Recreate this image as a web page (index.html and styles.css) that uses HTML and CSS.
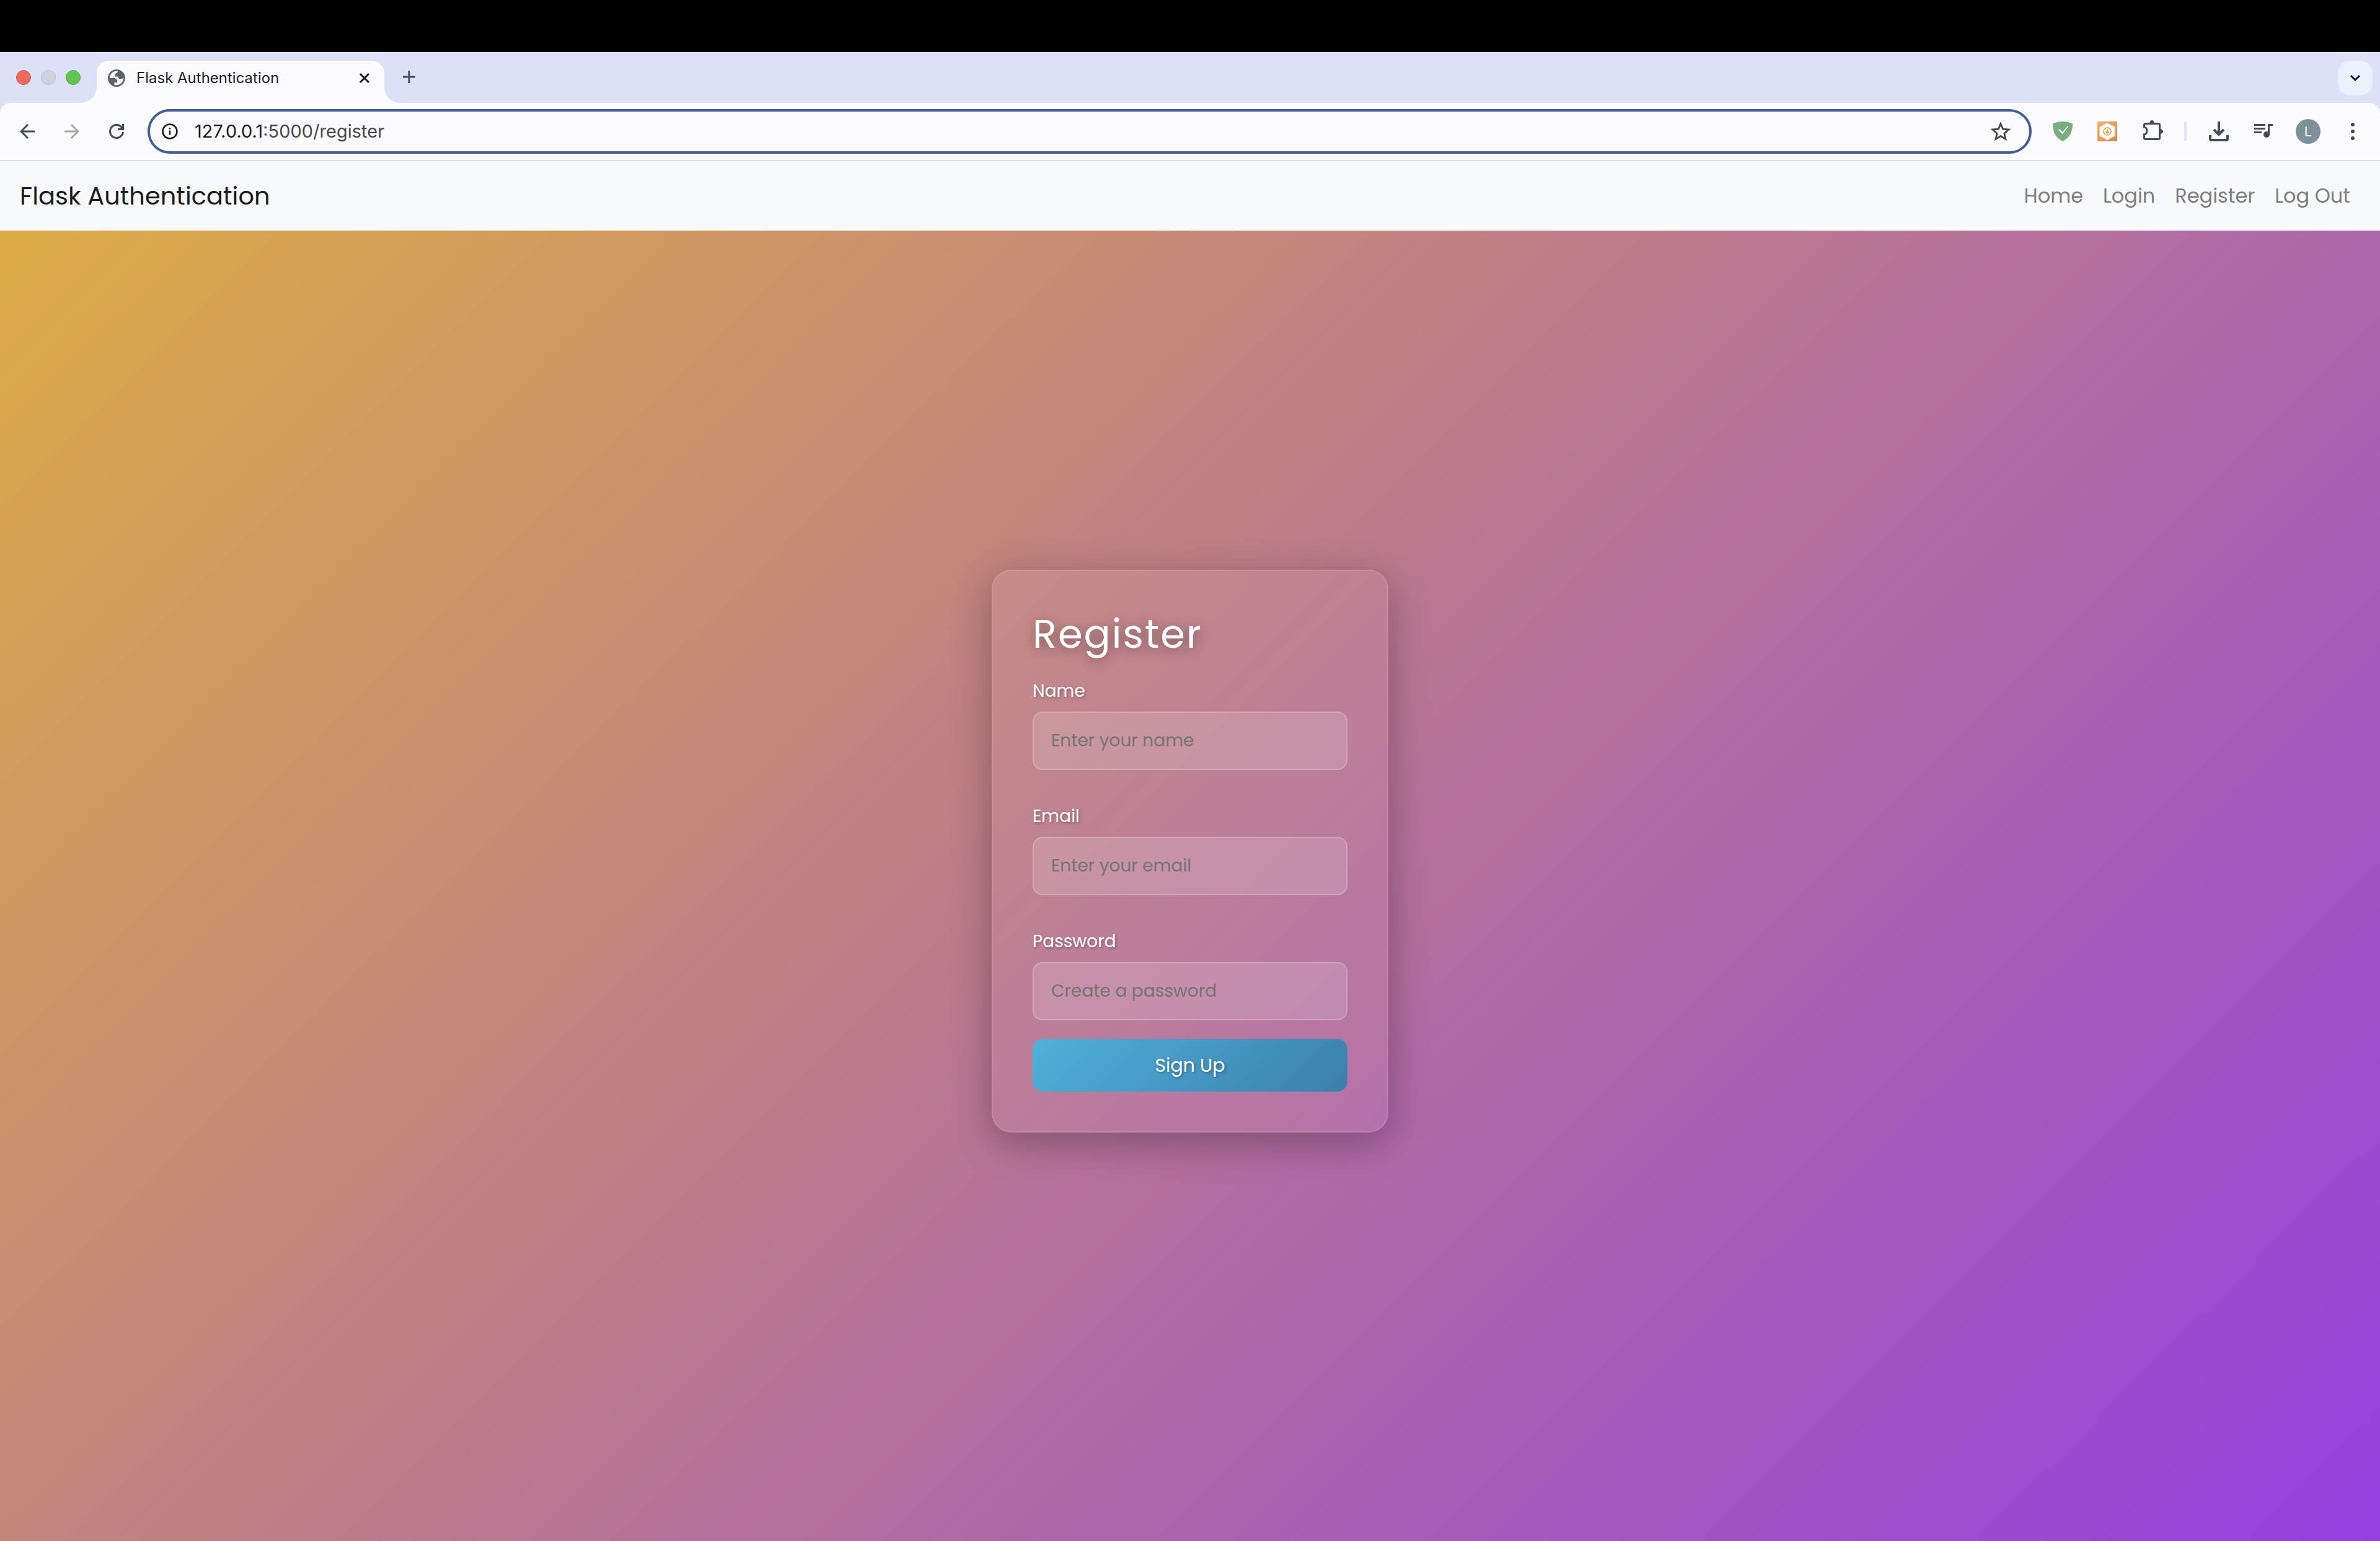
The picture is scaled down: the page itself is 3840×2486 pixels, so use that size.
FILE: index.html
```
<!DOCTYPE html>
<html lang="en">
<head>
<meta charset="utf-8">
<title>Flask Authentication</title>
<link rel="stylesheet" href="styles.css">
</head>
<body>
<div class="screen-top"></div>

<header class="tab-strip">
  <div class="window-controls">
    <span class="light light-close"></span>
    <span class="light light-min"></span>
    <span class="light light-max"></span>
  </div>
  <div class="tab">
    <svg class="favicon" viewBox="2 2 20 20" aria-hidden="true"><path fill="#5f6368" fill-rule="evenodd" d="M12 2C6.480 2 2 6.480 2 12s4.480 10 10 10 10-4.480 10-10S17.520 2 12 2zM4 12h4.400c3.407.022 4.922 1.730 4.543 5.127H9.488v2.470a8.004 8.004 0 0 0 10.498-8.083C19.327 12.504 18.332 13 17 13c-2.137 0-3.206-.916-3.206-2.750h-3.748c-.274-2.728.683-4.092 2.870-4.092 0-.975.327-1.597.811-1.970A8.004 8.004 0 0 0 4 12z"/></svg>
    <span class="tab-title">Flask Authentication</span>
    <button class="icon-btn" aria-label="Close tab"><svg width="18" height="18" viewBox="0 0 18 18"><path d="M2 2l14 14M16 2L2 16" stroke="#1b1c20" stroke-width="3" fill="none"/></svg></button>
  </div>
  <button class="icon-btn new-tab" aria-label="New tab"><svg width="20" height="20" viewBox="0 0 20 20"><path d="M10 0v20M0 10h20" stroke="#444a59" stroke-width="3" fill="none"/></svg></button>
  <button class="icon-btn tab-search" aria-label="Search tabs"><svg width="18" height="12" viewBox="0 0 18 12"><path d="M2 2l7 7 7-7" stroke="#1b1c20" stroke-width="3" fill="none"/></svg></button>
</header>

<div class="toolbar">
  <div class="nav-buttons">
    <button class="icon-btn" aria-label="Back"><svg width="24" height="24" viewBox="0 0 24 24"><path d="M24 12H3M13 1L2 12l11 11" stroke="#444a59" stroke-width="3" fill="none"/></svg></button>
    <button class="icon-btn" aria-label="Forward"><svg width="24" height="24" viewBox="0 0 24 24"><path d="M0 12h21M11 1l11 11-11 11" stroke="#a6a6aa" stroke-width="3" fill="none"/></svg></button>
    <button class="icon-btn" aria-label="Reload"><svg width="24" height="24" viewBox="0 0 24 24"><path d="M22.500 13A10.500 10.500 0 1 1 19.500 4.500L22 7.500M22.500 0v8.500H14" stroke="#444a59" stroke-width="3" fill="none"/></svg></button>
  </div>
  <div class="omnibox">
    <svg width="28" height="28" viewBox="0 0 28 28" aria-hidden="true"><circle cx="14" cy="14" r="11.500" fill="none" stroke="#1b1c20" stroke-width="2.600"/><path d="M14 12.500v7M14 8v2.500" stroke="#1b1c20" stroke-width="2.500"/></svg>
    <span class="url">127.0.0.1<span class="url-path">:5000/register</span></span>
    <button class="icon-btn star" aria-label="Bookmark this page"><svg width="32" height="32" viewBox="0 0 32 32"><path d="M16 3.500l3.600 8.700 9.400.8-7.100 6.200 2.100 9.200-8-4.900-8 4.900 2.100-9.200L3 13l9.400-.8z" stroke="#47474b" stroke-width="2.800" fill="none"/></svg></button>
  </div>
  <div class="extensions">
    <button class="icon-btn" aria-label="AdGuard"><svg width="32" height="32" viewBox="0 0 32 32"><path d="M16 0c5 0 11 1 16 3.500C32 16 28 26 16 32 4 26 0 16 0 3.500 5 1 11 0 16 0z" fill="#7aae7c"/><path d="M9 13.500l2.500-1 4 4.500L24 7.500l1 .7L15.700 20.500z" fill="#fff"/></svg></button>
    <button class="icon-btn" aria-label="Downloader"><svg width="32" height="32" viewBox="0 0 32 32"><defs><linearGradient id="amber" x1="0" y1="0" x2="1" y2="1"><stop offset="0" stop-color="#e7b46a"/><stop offset="1" stop-color="#db8452"/></linearGradient></defs><path d="M0 0h32v32H0z" fill="url(#amber)"/><path d="M16 1.500l13 7v15l-13 7-13-7v-15z" fill="#f4cf9c"/><path d="M16 3l11.500 6.300v13.400L16 29 4.500 22.700V9.300z" fill="#fff"/><circle cx="16" cy="16" r="6" fill="none" stroke="#e3a04c" stroke-width="1.700"/><path d="M16 12v7M12.800 16l3.200 3 3.200-3" fill="none" stroke="#e3a04c" stroke-width="1.800"/></svg></button>
    <button class="icon-btn puzzle" aria-label="Extensions"><svg width="32" height="32" viewBox="0 0 32 32"><path d="M1.500 11V7.500a2 2 0 0 1 2-2h21a2 2 0 0 1 2 2v21a2 2 0 0 1-2 2h-21a2 2 0 0 1-2-2V23c6-.5 6-11.500 0-12z" fill="none" stroke="#444a59" stroke-width="3"/><path d="M10 5a4 5 0 0 1 8 0zM27 14a5 4 0 0 1 0 8z" fill="#444a59"/></svg></button>
  </div>
  <span class="divider"></span>
  <div class="browser-actions">
    <button class="icon-btn" aria-label="Downloads"><svg width="32" height="32" viewBox="0 0 32 32"><path d="M16 0v21M8 13l8 8 8-8" fill="none" stroke="#444a59" stroke-width="4"/><path d="M2 22v6a2 2 0 0 0 2 2h24a2 2 0 0 0 2-2v-6" fill="none" stroke="#444a59" stroke-width="4"/></svg></button>
    <button class="icon-btn" aria-label="Media controls"><svg width="32" height="32" viewBox="0 0 32 32"><path d="M1 5.500h18M1 11.500h18M1 17.500h12M31 5.500h-6.500V21" fill="none" stroke="#444a59" stroke-width="3"/><circle cx="21" cy="21" r="5" fill="#444a59"/></svg></button>
    <button class="icon-btn avatar" aria-label="Profile">L</button>
    <button class="icon-btn menu-btn" aria-label="Menu"><svg width="6" height="28" viewBox="0 0 6 28"><g fill="#444a59"><circle cx="3" cy="3" r="3"/><circle cx="3" cy="14" r="3"/><circle cx="3" cy="25" r="3"/></g></svg></button>
  </div>
</div>

<div class="page">
  <nav class="navbar">
    <a class="brand" href="#">Flask Authentication</a>
    <div class="links">
      <a href="#">Home</a>
      <a href="#">Login</a>
      <a href="#">Register</a>
      <a href="#">Log Out</a>
    </div>
  </nav>
  <main class="content">
    <form class="card">
      <h1 class="card-title">Register</h1>
      <div class="field">
        <label for="name">Name</label>
        <input id="name" type="text" placeholder="Enter your name">
      </div>
      <div class="field">
        <label for="email">Email</label>
        <input id="email" type="email" placeholder="Enter your email">
      </div>
      <div class="field">
        <label for="password">Password</label>
        <input id="password" type="password" placeholder="Create a password">
      </div>
      <button class="submit" type="submit">Sign Up</button>
    </form>
  </main>
</div>
</body>
</html>
```
FILE: styles.css
```
* {
  box-sizing: border-box;
}

body {
  margin: 0;
  min-height: 100vh;
  display: flex;
  flex-direction: column;
  font-family: Poppins, Inter, "Noto Sans", sans-serif;
}

button {
  font-family: inherit;
  border: 0;
  padding: 0;
  cursor: pointer;
}

svg {
  display: block;
  flex: none;
}

a {
  text-decoration: none;
}

.icon-btn {
  display: flex;
  align-items: center;
  justify-content: center;
  flex: none;
  background: none;
}

/* Browser window */

.screen-top {
  height: 84px;
  background: #000;
}

.tab-strip,
.toolbar {
  font-family: Inter, "Noto Sans", sans-serif;
}

.tab-strip {
  height: 82px;
  padding: 14px 12px 0 26px;
  display: flex;
  align-items: flex-start;
  background: #dce1f7;
}

.window-controls {
  display: flex;
  gap: 16px;
  padding-top: 15px;
}

.light {
  width: 24px;
  height: 24px;
  border-radius: 50%;
  border: 1px solid;
}

.light-close {
  background: #ed6a5e;
  border-color: #d55549;
}

.light-min {
  background: #d1d3df;
  border-color: #bcbecb;
}

.light-max {
  background: #61c554;
  border-color: #4cab40;
}

.tab {
  position: relative;
  width: 464px;
  height: 68px;
  margin-left: 26px;
  padding: 0 23px 12px 18px;
  display: flex;
  align-items: center;
  background: #fafaff;
  border-radius: 20px 20px 0 0;
}

.tab::before,
.tab::after {
  content: "";
  position: absolute;
  bottom: 0;
  width: 24px;
  height: 24px;
}

.tab::before {
  right: 100%;
  background: radial-gradient(circle at 0 0, transparent 23px, #fafaff 24px);
}

.tab::after {
  left: 100%;
  background: radial-gradient(circle at 100% 0, transparent 23px, #fafaff 24px);
}

.favicon {
  width: 28px;
  height: 28px;
}

.tab-title {
  flex: 1;
  margin-left: 18px;
  font-size: 24px;
  line-height: 32px;
  color: #1b1c20;
}

.new-tab {
  width: 56px;
  height: 56px;
  margin-left: 12px;
  padding-bottom: 4px;
}

.tab-search {
  width: 56px;
  height: 56px;
  margin-left: auto;
  border-radius: 20px;
  background: #ecefff;
}

.toolbar {
  height: 94px;
  padding: 10px 41px 10px 32px;
  display: flex;
  align-items: flex-start;
  background: #fafaff;
  border-bottom: 2px solid #dfe1ec;
  position: relative;
}

.toolbar::before,
.toolbar::after {
  content: "";
  position: absolute;
  top: 0;
  width: 16px;
  height: 16px;
}

.toolbar::before {
  left: 0;
  background: radial-gradient(circle at 100% 100%, #fafaff 15px, #dce1f7 16px);
}

.toolbar::after {
  right: 0;
  background: radial-gradient(circle at 0 100%, #fafaff 15px, #dce1f7 16px);
}

.nav-buttons,
.extensions,
.browser-actions {
  height: 72px;
  display: flex;
  align-items: center;
}

.nav-buttons {
  gap: 48px;
  margin-right: 38px;
}

.omnibox {
  flex: 1;
  height: 72px;
  padding: 0 30px 0 18px;
  display: flex;
  align-items: center;
  border: 4px solid #435f99;
  border-radius: 36px;
}

.url {
  flex: 1;
  margin-left: 26px;
  font-size: 29px;
  line-height: 40px;
  color: #1b1c20;
}

.url-path {
  color: #47474b;
}

.extensions {
  gap: 40px;
  margin-left: 34px;
}

.puzzle {
  margin-left: 2px;
  padding-bottom: 4px;
}

.divider {
  width: 4px;
  height: 32px;
  margin: 20px 36px 0 34px;
  border-radius: 2px;
  background: #d9e4fc;
}

.browser-actions {
  gap: 40px;
}

.avatar {
  width: 40px;
  height: 40px;
  margin-left: -4px;
  border-radius: 50%;
  background: #7d909b;
  color: #fff;
  font-size: 22px;
}

.menu-btn {
  margin-left: 9px;
}

/* Site */

.page {
  flex: 1;
  display: flex;
  flex-direction: column;
  background: linear-gradient(135deg, #deae43, #9440e0);
}

.navbar {
  height: 112px;
  padding: 0 48px 0 32px;
  display: flex;
  align-items: center;
  justify-content: space-between;
  background: #f8f9fa;
}

.brand {
  font-size: 40px;
  line-height: 60px;
  color: #1a1a1a;
}

.links {
  display: flex;
  gap: 32px;
}

.links a {
  font-size: 32px;
  line-height: 48px;
  color: #7c7d7d;
}

.content {
  flex: 1;
  padding-bottom: 112px;
  display: flex;
  align-items: center;
  justify-content: center;
}

.card {
  width: 640px;
  padding: 64px;
  display: flex;
  flex-direction: column;
  border: 2px solid rgba(255, 255, 255, 0.12);
  border-radius: 32px;
  background: rgba(255, 255, 255, 0.06);
  box-shadow: 0 16px 64px rgba(0, 0, 0, 0.3);
}

.card-title {
  margin: 0 0 32px;
  font-size: 64px;
  font-weight: 400;
  line-height: 76px;
  letter-spacing: 2px;
  color: #fff;
  text-shadow: 0 4px 20px rgba(0, 0, 0, 0.4);
}

.field {
  display: flex;
  flex-direction: column;
  margin-bottom: 53px;
}

.field:last-of-type {
  margin-bottom: 30px;
}

.field label {
  margin-bottom: 11px;
  font-size: 28px;
  line-height: 44px;
  color: #fff;
  text-shadow: 2px 2px 4px rgba(0, 0, 0, 0.3);
}

.field input {
  width: 100%;
  height: 94px;
  padding: 0 28px;
  border: 2px solid rgba(255, 255, 255, 0.2);
  border-radius: 16px;
  background: rgba(255, 255, 255, 0.15);
  font-family: inherit;
  font-size: 28px;
  color: #fff;
}

.field input::placeholder {
  color: #757575;
}

.submit {
  height: 85px;
  border-radius: 16px;
  background: linear-gradient(135deg, #50b1d9, #3a7fad);
  color: #fff;
  font-size: 30px;
  text-shadow: 2px 2px 4px rgba(0, 0, 0, 0.3);
}
```
